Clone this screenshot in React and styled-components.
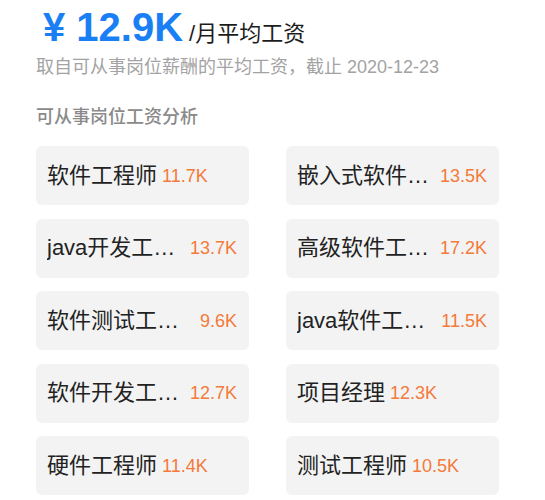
import styled, { createGlobalStyle } from 'styled-components'

const GlobalStyle = createGlobalStyle`
   body {
      margin: 0;
      background: #fff;
      font-family: "Liberation Sans", "Noto Sans CJK SC", sans-serif;
   }
`

const jobs = [
   { name: '软件工程师', salary: '11.7K' },
   { name: '嵌入式软件工程师', salary: '13.5K' },
   { name: 'java开发工程师', salary: '13.7K' },
   { name: '高级软件工程师', salary: '17.2K' },
   { name: '软件测试工程师', salary: '9.6K' },
   { name: 'java软件工程师', salary: '11.5K' },
   { name: '软件开发工程师', salary: '12.7K' },
   { name: '项目经理', salary: '12.3K' },
   { name: '硬件工程师', salary: '11.4K' },
   { name: '测试工程师', salary: '10.5K' },
]

const Page = styled.div`
   width: 463px;
   padding: 7px 0 0 36px;
`

const PriceRow = styled.div`
   display: flex;
   align-items: baseline;
   margin-left: 7px;
   height: 40px;
`

const Price = styled.span`
   color: #1a7ef5;
   font-size: 40px;
   font-weight: 700;
   line-height: 40px;
   white-space: pre;
`

const Unit = styled.span`
   margin-left: 6px;
   color: #1c1c1c;
   font-size: 22px;
   line-height: 30px;
`

const Subtitle = styled.div`
   margin-top: 7px;
   color: #a3a3a3;
   font-size: 18px;
   line-height: 26px;
`

const SectionTitle = styled.div`
   margin-top: 25px;
   color: #8a8a8a;
   font-size: 18px;
   font-weight: 500;
   line-height: 24px;
`

const Grid = styled.div`
   margin-top: 17px;
   display: grid;
   grid-template-columns: 1fr 1fr;
   column-gap: 37px;
   row-gap: 13.5px;
`

const Card = styled.div`
   height: 59px;
   display: flex;
   align-items: center;
   padding: 0 12px 0 11px;
   background: #f3f3f3;
   border-radius: 6px;
   min-width: 0;
`

const JobName = styled.span`
   flex: 0 1 auto;
   min-width: 0;
   overflow: hidden;
   white-space: nowrap;
   text-overflow: ellipsis;
   color: #222;
   font-size: 22px;
   line-height: 30px;
`

const Salary = styled.span`
   flex-shrink: 0;
   margin-left: 5px;
   color: #f47a3a;
   font-size: 18px;
   line-height: 24px;
`

export default function App() {
   return (
      <Page>
         <GlobalStyle />
         <PriceRow>
            <Price>¥ 12.9K</Price>
            <Unit>/月平均工资</Unit>
         </PriceRow>
         <Subtitle>取自可从事岗位薪酬的平均工资，截止 2020-12-23</Subtitle>
         <SectionTitle>可从事岗位工资分析</SectionTitle>
         <Grid>
            {jobs.map((job) => (
               <Card key={job.name}>
                  <JobName>{job.name}</JobName>
                  <Salary>{job.salary}</Salary>
               </Card>
            ))}
         </Grid>
      </Page>
   )
}
